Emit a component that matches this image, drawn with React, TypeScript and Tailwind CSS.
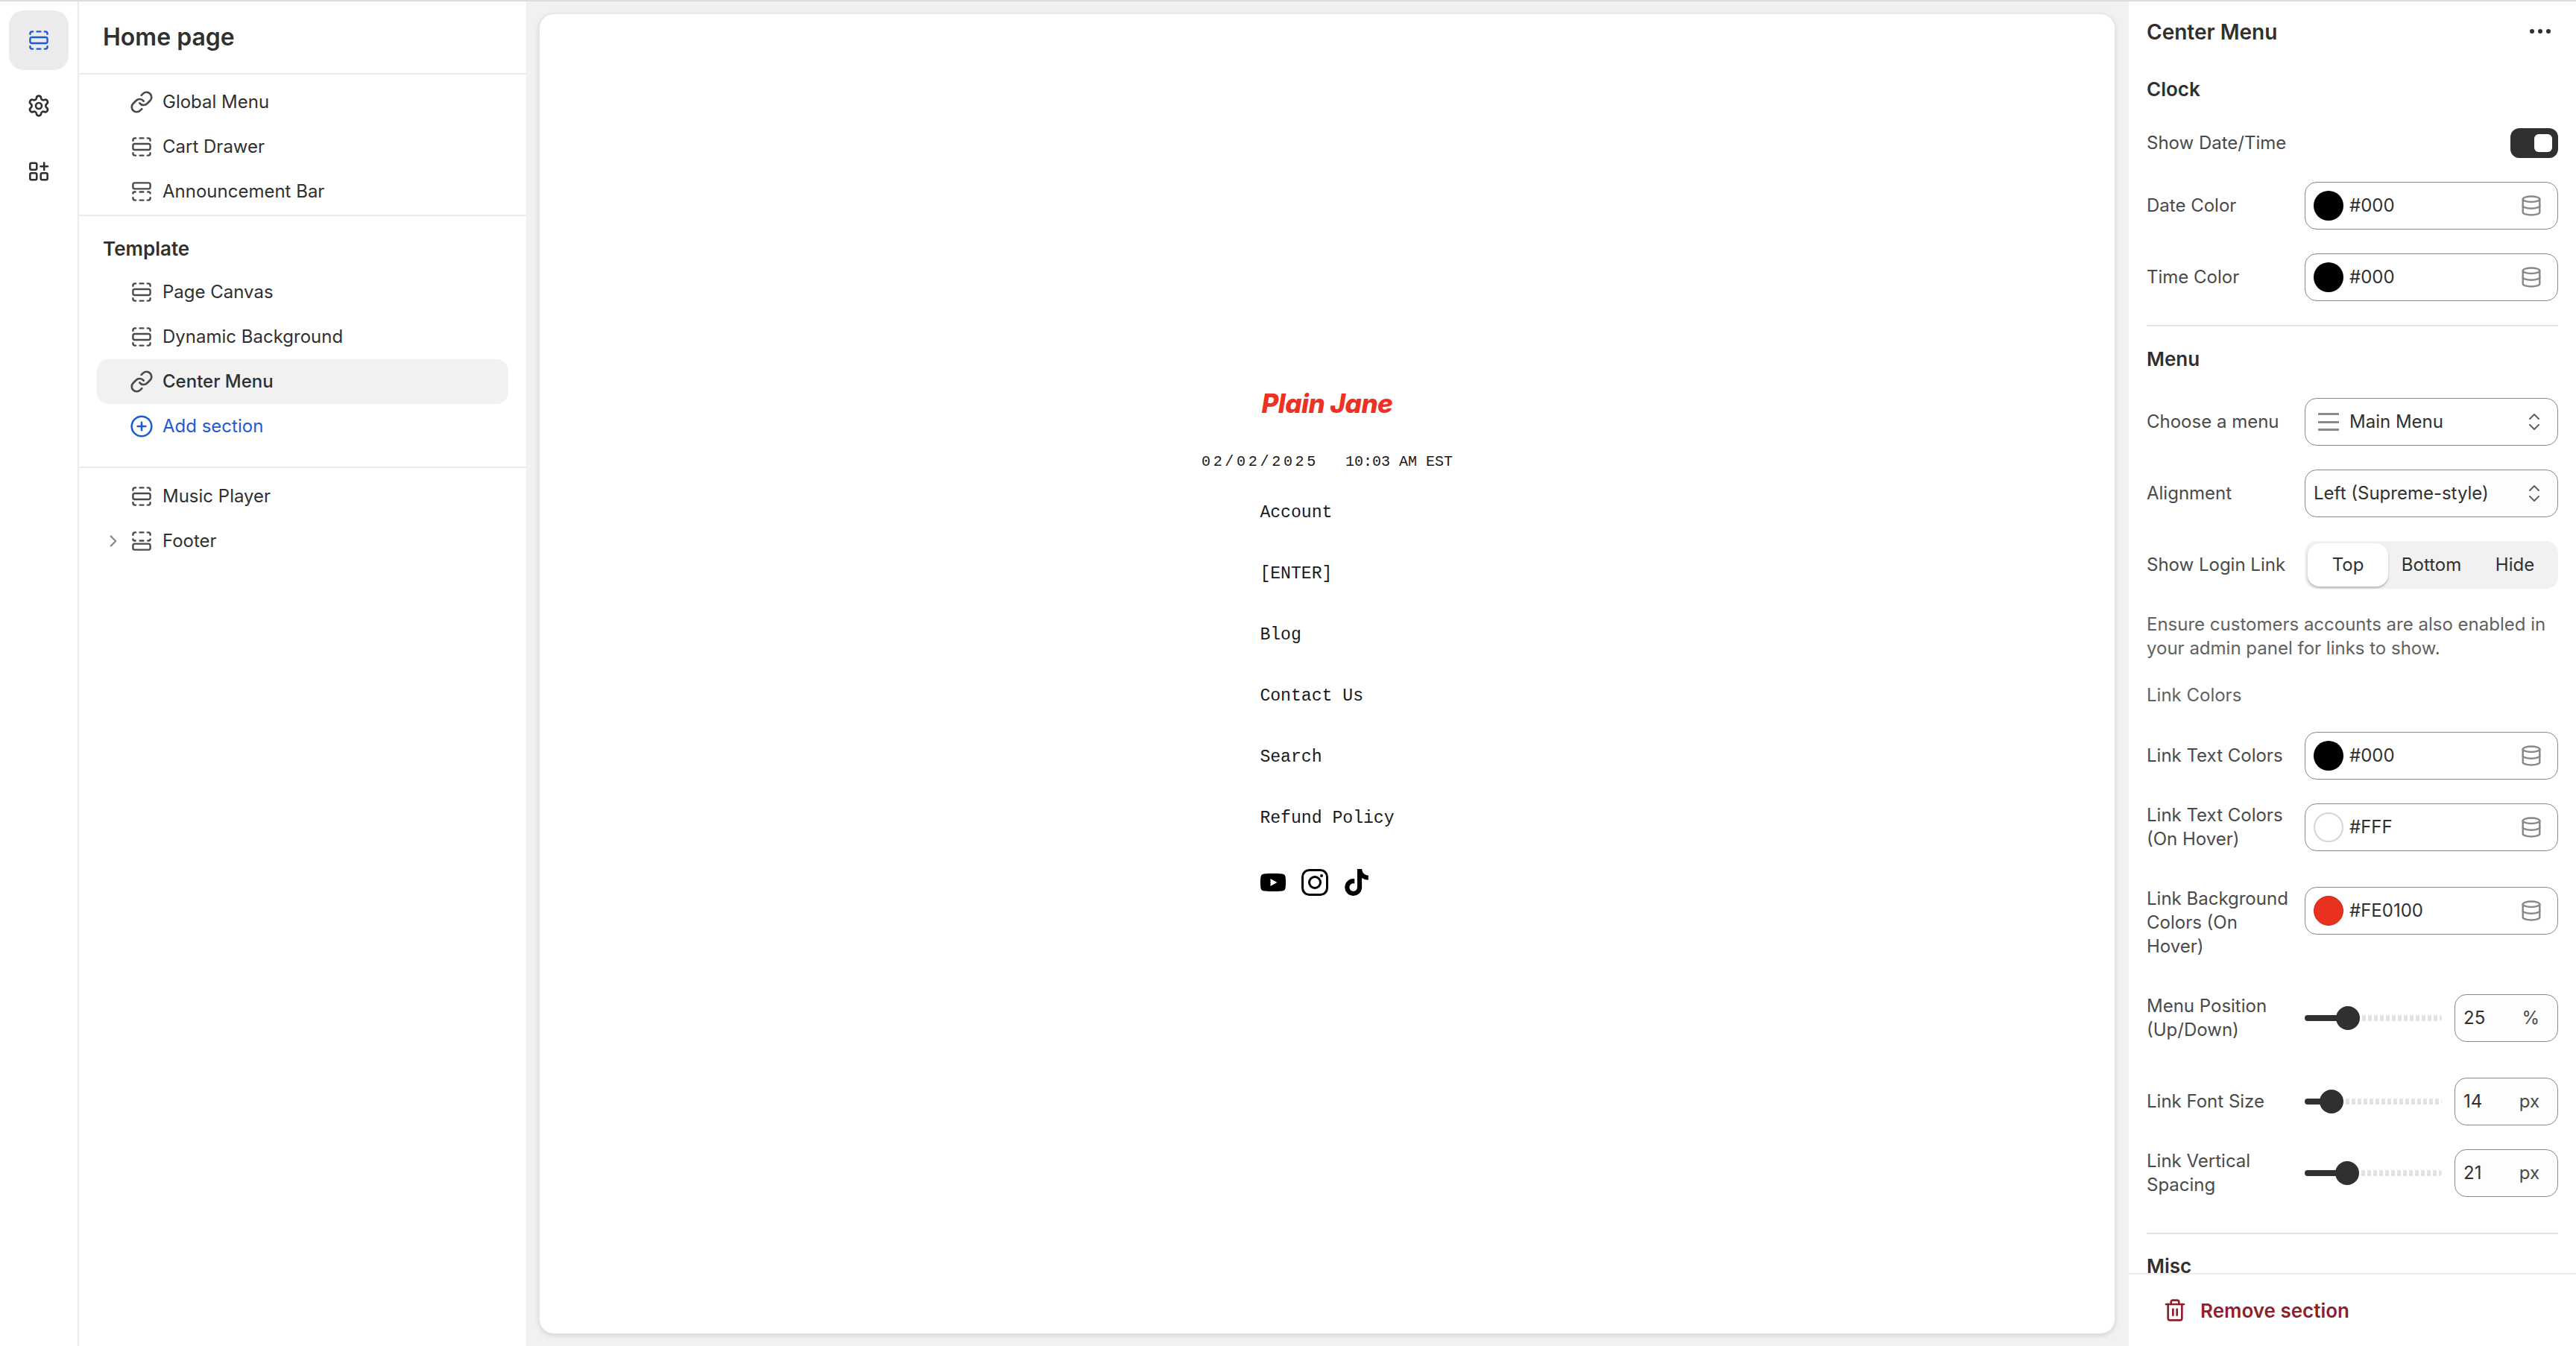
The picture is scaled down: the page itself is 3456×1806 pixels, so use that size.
import { ChevronRight, CirclePlus, Database, Link as LinkIcon, Settings, Trash2 } from "lucide-react";
import { FaTiktok, FaYoutube } from "react-icons/fa";

type SectionKind = "mid" | "top" | "bottom";

function SectionIcon({ kind, className }: { kind: SectionKind; className?: string }) {
  return (
    <svg viewBox="0 0 20 20" fill="none" stroke="currentColor" strokeWidth="1.5" strokeLinecap="round" className={className}>
      {kind === "mid" && (
        <>
          <path d="M2.75 4.9v-.4a1.75 1.75 0 0 1 1.75-1.75h.6M8.5 2.75h3M14.9 2.75h.6a1.75 1.75 0 0 1 1.75 1.75v.4" />
          <rect x="2.75" y="7.5" width="14.5" height="5" rx="1.5" />
          <path d="M2.75 15.1v.4a1.75 1.75 0 0 0 1.75 1.75h.6M8.5 17.25h3M14.9 17.25h.6a1.75 1.75 0 0 0 1.75-1.75v-.4" />
        </>
      )}
      {kind === "top" && (
        <>
          <rect x="2.75" y="2.75" width="14.5" height="5" rx="1.5" />
          <path d="M2.75 11.6v-.1a1.2 1.2 0 0 1 1.2-1.2h.9M8.5 10.3h3M15.15 10.3h.9a1.2 1.2 0 0 1 1.2 1.2v.1M2.75 15.1v.4a1.75 1.75 0 0 0 1.75 1.75h.6M8.5 17.25h3M14.9 17.25h.6a1.75 1.75 0 0 0 1.75-1.75v-.4" />
        </>
      )}
      {kind === "bottom" && (
        <>
          <path d="M2.75 4.9v-.4a1.75 1.75 0 0 1 1.75-1.75h.6M8.5 2.75h3M14.9 2.75h.6a1.75 1.75 0 0 1 1.75 1.75v.4M2.75 8.4v.1a1.2 1.2 0 0 0 1.2 1.2h.9M8.5 9.7h3M15.15 9.7h.9a1.2 1.2 0 0 0 1.2-1.2v-.1" />
          <rect x="2.75" y="12.25" width="14.5" height="5" rx="1.5" />
        </>
      )}
    </svg>
  );
}

function AppsIcon() {
  return (
    <svg viewBox="0 0 20 20" fill="none" stroke="#303030" strokeWidth="1.6" strokeLinecap="round" className="w-8 h-8">
      <rect x="2.7" y="3" width="5.6" height="5.6" rx="1.2" />
      <rect x="2.7" y="11.4" width="5.6" height="5.6" rx="1.2" />
      <rect x="11.7" y="11.4" width="5.6" height="5.6" rx="1.2" />
      <path d="M14.5 2.8v6M11.5 5.8h6" />
    </svg>
  );
}

function TreeRow({ label, icon, active, chevron }: { label: string; icon: React.ReactNode; active?: boolean; chevron?: boolean }) {
  return (
    <div className={`mx-6 h-[60px] rounded-2xl flex items-center text-[24px] text-[#303030] ${active ? "bg-[#f1f1f1] font-medium" : ""}`}>
      <div className="w-11 flex justify-center">
        {chevron && <ChevronRight size={26} strokeWidth={2.2} className="text-[#8a8a8a]" />}
      </div>
      <div className="w-8 h-8 mr-3 text-[#4a4a4a]">{icon}</div>
      <span>{label}</span>
    </div>
  );
}

function LeftPanel() {
  const section = <SectionIcon kind="mid" className="w-8 h-8" />;
  const link = <LinkIcon size={32} strokeWidth={2} />;
  return (
    <div className="w-[600px] shrink-0 bg-white">
      <div className="h-[98px] border-b-2 border-[#ebebeb] pl-8 flex items-center text-[32px] font-semibold text-[#303030]">
        Home page
      </div>
      <div className="pt-[7px] pb-px border-b-2 border-[#ebebeb]">
        <TreeRow label="Global Menu" icon={link} />
        <TreeRow label="Cart Drawer" icon={section} />
        <TreeRow label="Announcement Bar" icon={<SectionIcon kind="top" className="w-8 h-8" />} />
      </div>
      <div className="pb-6 border-b-2 border-[#ebebeb]">
        <div className="pl-8 pt-7 h-[72px] text-[26px] leading-8 font-semibold text-[#303030]">Template</div>
        <TreeRow label="Page Canvas" icon={section} />
        <TreeRow label="Dynamic Background" icon={section} />
        <TreeRow label="Center Menu" icon={link} active />
        <div className="mx-6 h-[60px] flex items-center text-[24px] text-[#1d5ad6]">
          <div className="w-11" />
          <CirclePlus size={32} strokeWidth={1.9} className="mr-3" />
          <span>Add section</span>
        </div>
      </div>
      <div className="pt-2">
        <TreeRow label="Music Player" icon={section} />
        <TreeRow label="Footer" icon={<SectionIcon kind="bottom" className="w-8 h-8" />} chevron />
      </div>
    </div>
  );
}

function Preview() {
  const links = ["Account", "[ENTER]", "Blog", "Contact Us", "Search", "Refund Policy"];
  return (
    <div className="flex-1 bg-[#f1f1f1] pl-[17px] pr-[18px] pt-4 pb-4">
      <div className="h-full rounded-[20px] bg-white border border-[#e6e6e6] shadow-[0_2px_6px_rgba(0,0,0,0.12)] flex flex-col items-center pt-[502px] text-[#1a1a1a] font-['Liberation_Mono',monospace]">
        <div className="h-10 leading-10 text-[35px] font-['Inter',sans-serif] font-extrabold italic tracking-[-0.5px] text-[#ee3124]">Plain Jane</div>
        <div className="mt-[47px] h-6 leading-6 text-[20px] flex">
          <span className="tracking-[3.7px] mr-[36px]">02/02/2025</span>
          <span>10:03 AM EST</span>
        </div>
        <div className="mt-[40px] flex flex-col gap-[50px] text-[23.1px] leading-8">
          {links.map((l) => (
            <div key={l}>{l}</div>
          ))}
          <div className="mt-[2px] flex items-center gap-5 text-black">
            <FaYoutube size={36} />
            <svg viewBox="0 0 36 36" fill="none" stroke="black" strokeWidth="3" className="w-9 h-9">
              <rect x="1.5" y="1.5" width="33" height="33" rx="9" />
              <circle cx="18" cy="18" r="7.5" />
              <circle cx="27" cy="9" r="2" fill="black" stroke="none" />
            </svg>
            <FaTiktok size={36} />
          </div>
        </div>
      </div>
    </div>
  );
}

function Swatch({ color }: { color: string }) {
  if (color === "#FFF") return <div className="w-10 h-10 rounded-full border-2 border-[#d6d6d6] bg-white shrink-0" />;
  if (color === "#FE0100") return <div className="w-10 h-10 rounded-full border border-[#c9281a] bg-[#e8321f] shrink-0" />;
  return <div className="w-10 h-10 rounded-full bg-black shrink-0" />;
}

function Row({ label, children, className = "" }: { label: string; children: React.ReactNode; className?: string }) {
  return (
    <div className={`flex items-start ${className}`}>
      <div className="w-[196px] mr-4 min-h-16 flex items-center text-[24px] leading-8 text-[#4a4a4a]">{label}</div>
      {children}
    </div>
  );
}

function ColorField({ value }: { value: string }) {
  return (
    <div className="w-[340px] h-16 rounded-2xl border-[1.5px] border-[#8a8a8a] bg-white flex items-center pl-[11px] pr-5 text-[24px] text-[#303030]">
      <Swatch color={value} />
      <span className="ml-2 flex-1">{value}</span>
      <Database size={30} strokeWidth={2} className="text-[#8a8a8a]" />
    </div>
  );
}

function UpDown() {
  return (
    <svg viewBox="0 0 16 24" fill="none" stroke="#616161" strokeWidth="2" strokeLinecap="round" strokeLinejoin="round" className="w-4 h-6 shrink-0">
      <path d="M2 8l6-6 6 6M2 16l6 6 6-6" />
    </svg>
  );
}

function SliderRow({ label, value, unit, fill, className }: { label: string; value: string; unit: string; fill: string; className: string }) {
  return (
    <Row label={label} className={className}>
      <div className="w-[184px] h-16 flex items-center">
        <div className={`h-2 rounded-l-full bg-[#303030] -mr-1 ${fill}`} />
        <div className="w-8 h-8 rounded-full bg-[#303030] shrink-0" />
        <div className="flex-1 h-2 ml-[3px] rounded-r-full bg-[repeating-linear-gradient(90deg,#e3e3e3_0,#e3e3e3_5px,transparent_5px,transparent_8px)]" />
      </div>
      <div className="ml-[17px] w-[139px] h-16 rounded-2xl border-[1.5px] border-[#8a8a8a] bg-[#fdfdfd] flex items-center justify-between pl-[11px] pr-6 text-[24px] text-[#303030]">
        <span>{value}</span>
        <span className="text-[#4a4a4a]">{unit}</span>
      </div>
    </Row>
  );
}

function RightPanel() {
  return (
    <div className="w-[600px] shrink-0 bg-white flex flex-col">
      <div className="flex-1 overflow-hidden pl-6 pr-6">
        <div className="h-[82px] flex items-center justify-between text-[28px] font-semibold text-[#303030]">
          <span>Center Menu</span>
          <svg viewBox="0 0 32 32" fill="#303030" className="w-8 h-8 mr-2">
            <circle cx="5" cy="15" r="3" />
            <circle cx="16" cy="15" r="3" />
            <circle cx="27" cy="15" r="3" />
          </svg>
        </div>
        <div className="mt-5 h-8 leading-8 text-[26px] font-semibold text-[#303030]">Clock</div>
        <div className="mt-9 h-10 flex items-center justify-between text-[24px] text-[#4a4a4a]">
          <span>Show Date/Time</span>
          <div className="w-16 h-10 rounded-xl bg-[#303030] p-2 flex justify-end">
            <div className="w-6 h-6 rounded-md bg-white" />
          </div>
        </div>
        <Row label="Date Color" className="mt-8"><ColorField value="#000" /></Row>
        <Row label="Time Color" className="mt-8"><ColorField value="#000" /></Row>
        <div className="mt-8 h-0.5 bg-[#e3e3e3]" />
        <div className="mt-7 h-8 leading-8 text-[26px] font-semibold text-[#303030]">Menu</div>
        <Row label="Choose a menu" className="mt-9">
          <div className="w-[340px] h-16 rounded-2xl border-[1.5px] border-[#8a8a8a] bg-white flex items-center pl-[17px] pr-[23px] text-[24px] text-[#303030]">
            <div className="w-7 h-6 flex flex-col justify-between shrink-0">
              <div className="h-[3px] bg-[#8a8a8a]" />
              <div className="h-[3px] bg-[#8a8a8a]" />
              <div className="h-[3px] bg-[#8a8a8a]" />
            </div>
            <span className="ml-3.5 flex-1">Main Menu</span>
            <UpDown />
          </div>
        </Row>
        <Row label="Alignment" className="mt-8">
          <div className="w-[340px] h-16 rounded-2xl border-[1.5px] border-[#8a8a8a] bg-[#fdfdfd] flex items-center pl-[11px] pr-[23px] text-[24px] text-[#303030]">
            <span className="flex-1">Left (Supreme-style)</span>
            <UpDown />
          </div>
        </Row>
        <Row label="Show Login Link" className="mt-8">
          <div className="w-[340px] h-16 rounded-2xl bg-[#f1f1f1] flex pl-1 py-[3px] text-[24px] text-[#303030]">
            <div className="w-[108px] rounded-2xl bg-white shadow-[0_2px_3px_rgba(0,0,0,0.25)] flex items-center justify-center">Top</div>
            <div className="w-[116px] flex items-center justify-center">Bottom</div>
            <div className="w-[108px] flex items-center justify-center">Hide</div>
          </div>
        </Row>
        <p className="mt-8 text-[24px] leading-8 text-[#616161]">
          Ensure customers accounts are also enabled in your admin panel for links to show.
        </p>
        <div className="mt-[31px] h-8 leading-8 text-[24px] text-[#616161]">Link Colors</div>
        <Row label="Link Text Colors" className="mt-[33px]"><ColorField value="#000" /></Row>
        <Row label="Link Text Colors (On Hover)" className="mt-8"><ColorField value="#FFF" /></Row>
        <Row label="Link Background Colors (On Hover)" className="mt-12"><ColorField value="#FE0100" /></Row>
        <SliderRow label="Menu Position (Up/Down)" value="25" unit="%" fill="w-[46px]" className="mt-12" />
        <SliderRow label="Link Font Size" value="14" unit="px" fill="w-[24px]" className="mt-12" />
        <SliderRow label="Link Vertical Spacing" value="21" unit="px" fill="w-[45px]" className="mt-8" />
        <div className="mt-12 h-0.5 bg-[#e3e3e3]" />
        <div className="mt-[27px] h-8 leading-8 text-[26px] font-semibold text-[#303030]">Misc</div>
      </div>
      <div className="h-[98px] shrink-0 border-t-2 border-[#ebebeb] pl-[46px] flex items-center text-[26px] font-semibold text-[#8e1f2b]">
        <Trash2 size={32} strokeWidth={2} className="mr-[18px]" />
        <span>Remove section</span>
      </div>
    </div>
  );
}

export default function App() {
  return (
    <div className="w-[3456px] h-[1806px] overflow-hidden flex flex-col bg-white font-['Inter',sans-serif]">
      <div className="h-0.5 shrink-0 bg-[#dcdcdc]" />
      <div className="flex-1 min-h-0 flex">
        <div className="w-[106px] shrink-0 border-r-2 border-[#ebebeb] pl-3 pt-3 flex flex-col gap-2">
          <div className="w-20 h-20 rounded-[20px] bg-[#ebebeb] flex items-center justify-center text-[#1d5ad6]">
            <SectionIcon kind="mid" className="w-8 h-8" />
          </div>
          <div className="w-20 h-20 flex items-center justify-center text-[#303030]">
            <Settings size={32} strokeWidth={2} />
          </div>
          <div className="w-20 h-20 flex items-center justify-center">
            <AppsIcon />
          </div>
        </div>
        <LeftPanel />
        <Preview />
        <RightPanel />
      </div>
    </div>
  );
}
